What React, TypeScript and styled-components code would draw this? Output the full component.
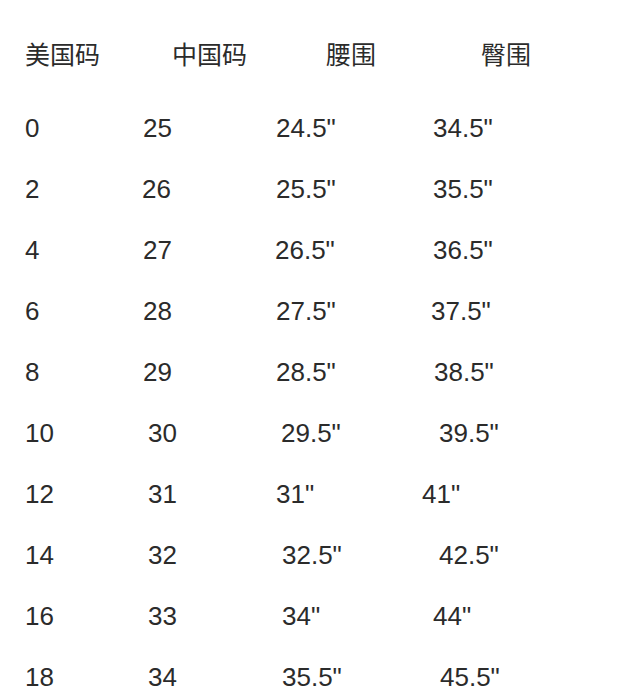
import React from 'react';
import styled, { createGlobalStyle } from 'styled-components';

const GlobalStyle = createGlobalStyle`
  html, body {
    margin: 0;
    padding: 0;
    background: #ffffff;
  }
  body {
    font-family: "Liberation Sans", "Noto Sans CJK SC", Arial, sans-serif;
    color: #2b2b2b;
  }
`;

const S = {
  Page: styled.div`
    width: 640px;
    height: 699px;
    overflow: hidden;
    padding: 25px 0 0 25px;
    box-sizing: border-box;
  `,
  Row: styled.div<{ $header?: boolean }>`
    display: grid;
    grid-template-columns: 118px 133px 157px 1fr;
    height: 61px;
    line-height: 61px;
    font-size: 26px;
    margin-bottom: ${({ $header }) => ($header ? '12px' : '0')};
    ${({ $header }) =>
      $header &&
      `
      font-size: 25px;
      line-height: 61px;
    `}
  `,
  Cell: styled.div<{ $shift?: number }>`
    margin-left: ${({ $shift }) => $shift ?? 0}px;
    white-space: nowrap;
  `,
};

interface RowData {
  cells: string[];
  shifts: number[];
}

const header: RowData = {
  cells: ['美国码', '中国码', '腰围', '臀围'],
  shifts: [0, 29, 50, 48],
};

const rows: RowData[] = [
  { cells: ['0', '25', '24.5"', '34.5"'], shifts: [0, 0, 0, 0] },
  { cells: ['2', '26', '25.5"', '35.5"'], shifts: [0, -1, 0, 0] },
  { cells: ['4', '27', '26.5"', '36.5"'], shifts: [0, 0, -1, 0] },
  { cells: ['6', '28', '27.5"', '37.5"'], shifts: [0, 0, 0, -2] },
  { cells: ['8', '29', '28.5"', '38.5"'], shifts: [0, 0, 0, 1] },
  { cells: ['10', '30', '29.5"', '39.5"'], shifts: [0, 5, 5, 6] },
  { cells: ['12', '31', '31"', '41"'], shifts: [0, 5, 0, -11] },
  { cells: ['14', '32', '32.5"', '42.5"'], shifts: [0, 5, 6, 6] },
  { cells: ['16', '33', '34"', '44"'], shifts: [0, 5, 6, 0] },
  { cells: ['18', '34', '35.5"', '45.5"'], shifts: [0, 5, 6, 7] },
];

const SizeRow = ({ data, isHeader }: { data: RowData; isHeader?: boolean }) => (
  <S.Row $header={isHeader}>
    {data.cells.map((text, i) => (
      <S.Cell key={i} $shift={data.shifts[i]}>
        {text}
      </S.Cell>
    ))}
  </S.Row>
);

const App = () => (
  <>
    <GlobalStyle />
    <S.Page>
      <SizeRow data={header} isHeader />
      {rows.map((row) => (
        <SizeRow key={row.cells[0]} data={row} />
      ))}
    </S.Page>
  </>
);

export default App;
